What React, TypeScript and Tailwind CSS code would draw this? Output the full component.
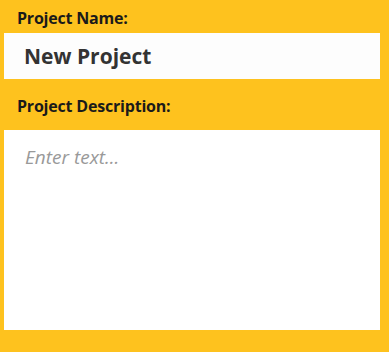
import React from "react";

const App = () => {
  return (
    <div className="w-[389px] h-[352px] bg-[#fec21e] px-[4px] flex flex-col" style={{ fontFamily: '"Open Sans", sans-serif' }}>
      <label className="h-[33px] flex items-center pt-[2px] pl-[13px] text-[16px] font-bold text-[#1a1a1a] tracking-[-0.2px]">Project Name:</label>
      <input
        defaultValue="New Project"
        className="w-[376px] h-[46px] bg-[#fdfdfd] px-[20px] text-[21px] font-bold text-[#333333] outline-none"
      />
      <label className="h-[51px] flex items-center pt-[2px] pl-[13px] text-[16px] font-bold text-[#1a1a1a] tracking-[-0.2px]">Project Description:</label>
      <textarea
        placeholder="Enter text..."
        className="w-[376px] h-[200px] bg-white px-[21px] py-[13px] text-[19px] italic font-medium text-[#333] placeholder:text-[#999999] outline-none resize-none"
      />
    </div>
  );
};

export default App;
